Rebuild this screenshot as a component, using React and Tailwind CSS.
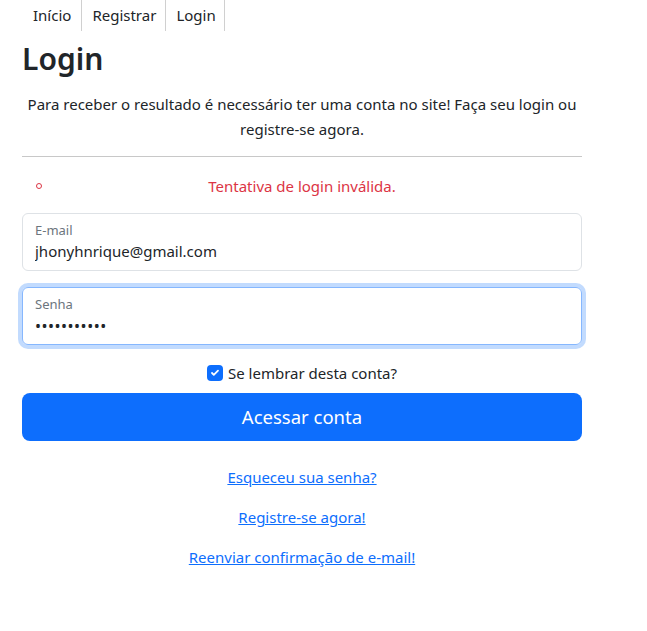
import React from 'react';

const font = { fontFamily: '"Noto Sans", "Liberation Sans", sans-serif' };

export default function App() {
  return (
    <div className="min-h-screen bg-white text-[#212529] text-base" style={font}>
      {/* Nav */}
      <nav className="flex h-[31px] pl-[22px] text-[15px]">
        <a className="flex items-center pl-[11px] pr-[10px] border-r border-[#d0d0d0] text-[#212529]">Início</a>
        <a className="flex items-center pl-[10px] pr-[9px] border-r border-[#d0d0d0] text-[#212529]">Registrar</a>
        <a className="flex items-center pl-[10px] pr-[8px] border-r border-[#d0d0d0] text-[#212529]">Login</a>
      </nav>

      <main className="w-[560px] ml-[22px]">
        <h1 className="text-[30px] font-semibold leading-[1.2] mt-[10px] mb-[15px]">Login</h1>
        <p className="text-center text-[15px] leading-[25px]">
          Para receber o resultado é necessário ter uma conta no site! Faça seu login ou registre-se agora.
        </p>
        <hr className="mt-[14px] mb-[17px] border-t border-[#c8c8c8]" />

        {/* Validation summary */}
        <ul className="mb-[15px] text-[#dc3545] text-[15px] leading-[24px]">
          <li className="relative text-center">
            <span className="absolute left-[14px] top-[9px] w-[6px] h-[6px] rounded-full border border-[#dc3545]" />
            Tentativa de login inválida.
          </li>
        </ul>

        <form>
          <div className="relative h-[58px] border border-[#dee2e6] rounded-[6px] px-[12px] mb-[16px]">
            <div className="text-[13px] text-[#6c757d] pt-[7px] leading-[18px]">E-mail</div>
            <input
              className="w-full outline-none text-[15px] leading-[24px] text-[#212529]"
              defaultValue="jhonyhnrique@gmail.com"
              style={font}
            />
          </div>

          <div className="relative h-[58px] border border-[#86b7fe] rounded-[6px] px-[12px] shadow-[0_0_0_4px_rgba(13,110,253,0.25)] mb-[16px]">
            <div className="text-[13px] text-[#6c757d] pt-[7px] leading-[19px]">Senha</div>
            <input
              type="password"
              className="w-full outline-none text-[16px] leading-[24px] tracking-[0.5px] text-[#212529]"
              defaultValue="12345678901"
              style={font}
            />
          </div>

          <div className="flex items-center justify-center gap-[5px] mb-[8px] leading-[24px] text-[15px]">
            <span className="w-[16px] h-[16px] rounded-[4px] bg-[#0d6efd] flex items-center justify-center">
              <svg width="12" height="12" viewBox="0 0 20 20" fill="none">
                <path d="M5 10l3 3 7-7" stroke="#fff" strokeWidth="3" strokeLinecap="round" strokeLinejoin="round" />
              </svg>
            </span>
            <label>Se lembrar desta conta?</label>
          </div>

          <button
            type="button"
            className="w-full h-[48px] rounded-[8px] bg-[#0d6efd] text-white text-[18.5px]"
          >
            Acessar conta
          </button>
        </form>

        <div className="flex flex-col items-center mt-[24px] gap-[16px] text-[15px] leading-[24px]">
          <a className="text-[#0d6efd] underline">Esqueceu sua senha?</a>
          <a className="text-[#0d6efd] underline">Registre-se agora!</a>
          <a className="text-[#0d6efd] underline">Reenviar confirmação de e-mail!</a>
        </div>
      </main>
    </div>
  );
}
